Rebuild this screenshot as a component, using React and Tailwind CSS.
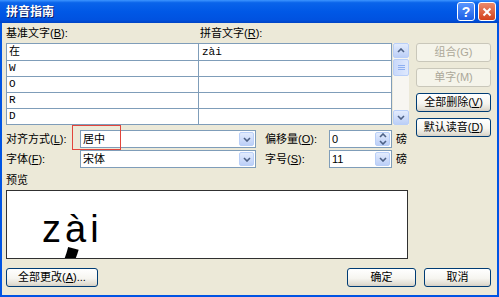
import React from 'react';
import clsx from 'clsx';

const ui = "font-['Liberation_Sans','Noto_Sans_CJK_SC',sans-serif]";

function U({ children }) {
  return <span className="underline underline-offset-1">{children}</span>;
}

function XpButton({ children, disabled, className }) {
  return (
    <div
      className={clsx(
        'flex h-[19px] items-center justify-center rounded-[3px] border text-[11px] leading-none',
        disabled
          ? 'border-[#c9c7ba] bg-[#f5f4ea] text-[#aca899]'
          : 'border-[#003c74] bg-[linear-gradient(180deg,#ffffff_0%,#f6f5f0_55%,#e3e0d6_85%,#d6d0c5_100%)] text-black',
        className
      )}
    >
      {children}
    </div>
  );
}

function Chevron({ up }) {
  return (
    <svg width="8" height="5" viewBox="0 0 8 5">
      <path d={up ? 'M1 4l3-3 3 3' : 'M1 1l3 3 3-3'} stroke="#4d6185" strokeWidth="1.6" fill="none" />
    </svg>
  );
}

function BlueBtn({ children, className }) {
  return (
    <div
      className={clsx(
        'flex w-[15px] flex-col items-center justify-center gap-[2px] rounded-[2px] border border-[#b9cff8] bg-[linear-gradient(180deg,#e3ecfd,#bccff7)]',
        className
      )}
    >
      {children}
    </div>
  );
}

function Combo({ value, width, spin }) {
  return (
    <div className={clsx('flex h-[18px] items-stretch border border-[#7f9db9] bg-white p-px', width)}>
      <div className="flex flex-1 items-center pl-px text-[11px] leading-none">{value}</div>
      <BlueBtn>
        {spin ? (
          <>
            <Chevron up />
            <Chevron />
          </>
        ) : (
          <Chevron />
        )}
      </BlueBtn>
    </div>
  );
}

const rows = [
  ['在', 'zài'],
  ['W', ''],
  ['O', ''],
  ['R', ''],
  ['D', ''],
];

export default function App() {
  return (
    <div className={clsx('flex h-[297px] w-[499px] flex-col bg-[#0054e3]', ui)}>
      {/* title bar */}
      <div className="flex h-[23px] items-center bg-[linear-gradient(180deg,#3d95ff_0%,#0a64ea_12%,#0058e6_50%,#0052e0_85%,#0043c4_100%)] pl-[6px] pr-[3px]">
        <div className="flex-1 text-[12px] font-bold text-white [text-shadow:1px_1px_0_#0a1e6a]">拼音指南</div>
        <div className="flex gap-[3px]">
          <div className="flex h-[19px] w-[18px] items-center justify-center rounded-[3px] border border-white bg-[linear-gradient(180deg,#5a96ff,#1c5fe5)] text-[14px] font-bold leading-none text-white">
            ?
          </div>
          <div className="flex h-[19px] w-[18px] items-center justify-center rounded-[3px] border border-white bg-[linear-gradient(180deg,#eb8a6c,#d4421c)]">
            <svg width="10" height="10" viewBox="0 0 10 10">
              <path d="M1.5 1.5l7 7M8.5 1.5l-7 7" stroke="white" strokeWidth="2" />
            </svg>
          </div>
        </div>
      </div>

      {/* body */}
      <div className="mx-[2px] mb-[2px] flex flex-1 flex-col bg-[#ece9d8] pl-[4px] text-black">
        <div className="flex">
          {/* left column */}
          <div className="flex w-[404px] flex-col">
            <div className="flex h-[20px] items-center text-[11px] leading-none">
              <span className="w-[194px]">
                基准文字(<U>B</U>):
              </span>
              <span>
                拼音文字(<U>R</U>):
              </span>
            </div>
            <div className="flex">
              <div className="flex w-[386px] flex-col border border-[#7f9db9] bg-white">
                {rows.map(([a, b], i) => (
                  <div key={i} className={clsx('flex h-[16px]', i > 0 && 'border-t border-[#7f9db9]')}>
                    <div className="flex w-[192px] items-center border-r border-[#7f9db9] pl-[2px] font-['Liberation_Mono','Noto_Sans_CJK_SC',monospace] text-[11px] leading-none">
                      {a}
                    </div>
                    <div className="flex flex-1 items-center pl-[3px] font-['Liberation_Mono',monospace] text-[11px] leading-none">
                      {b}
                    </div>
                  </div>
                ))}
              </div>
              <div className="ml-px flex w-[16px] flex-col bg-[#f7f6f1]">
                <BlueBtn className="h-[15px] w-[16px]">
                  <Chevron up />
                </BlueBtn>
                <div className="mt-px flex h-[17px] w-[16px] flex-col items-center justify-center gap-px rounded-[2px] border border-[#b9cff8] bg-[linear-gradient(90deg,#c9d9fb,#dfe9fd)]">
                  <div className="h-px w-[7px] bg-[#8fb0f0]" />
                  <div className="h-px w-[7px] bg-[#8fb0f0]" />
                  <div className="h-px w-[7px] bg-[#8fb0f0]" />
                </div>
                <div className="flex-1" />
                <BlueBtn className="h-[15px] w-[16px]">
                  <Chevron />
                </BlueBtn>
              </div>
            </div>

            <div className="mt-[5px] flex h-[18px] items-center text-[11px] leading-none">
              <span className="w-[74px]">
                对齐方式(<U>L</U>):
              </span>
              <div className="relative">
                <Combo value="居中" width="w-[176px]" />
                <div className="absolute left-[-8px] top-[-5px] h-[25px] w-[49px] border border-[#e2453c]" />
              </div>
              <span className="ml-[9px] w-[64px]">
                偏移量(<U>O</U>):
              </span>
              <Combo value="0" width="w-[63px]" spin />
              <span className="ml-[4px]">磅</span>
            </div>
            <div className="mt-[2px] flex h-[18px] items-center text-[11px] leading-none">
              <span className="w-[74px]">
                字体(<U>F</U>):
              </span>
              <Combo value="宋体" width="w-[176px]" />
              <span className="ml-[9px] w-[64px]">
                字号(<U>S</U>):
              </span>
              <Combo value="11" width="w-[63px]" />
              <span className="ml-[4px]">磅</span>
            </div>
          </div>

          {/* right buttons */}
          <div className="ml-[6px] flex w-[75px] flex-col gap-[6px] pt-[20px]">
            <XpButton disabled>组合(G)</XpButton>
            <XpButton disabled>单字(M)</XpButton>
            <XpButton>
              全部删除(<U>V</U>)
            </XpButton>
            <XpButton>
              默认读音(<U>D</U>)
            </XpButton>
          </div>
        </div>

        <div className="mt-[5px] flex h-[14px] items-center text-[11px] leading-none">预览</div>
        <div className="mt-[3px] h-[69px] w-[402px] overflow-hidden border border-[#303030] bg-white">
          <div className="ml-[35px] mt-[19px] font-['Liberation_Sans',sans-serif] text-[38px] leading-none tracking-[4px]">
            zài
          </div>
          <div className="ml-[30px] mt-[-7px] font-['Noto_Sans_CJK_SC',sans-serif] text-[84px] font-bold leading-none">
            在
          </div>
        </div>

        <div className="mt-[9px] flex items-center">
          <XpButton className="w-[92px]">
            全部更改(<U>A</U>)...
          </XpButton>
          <div className="flex-1" />
          <XpButton className="w-[69px]">确定</XpButton>
          <XpButton className="ml-[8px] w-[67px]">取消</XpButton>
          <div className="w-[6px]" />
        </div>
      </div>
    </div>
  );
}
